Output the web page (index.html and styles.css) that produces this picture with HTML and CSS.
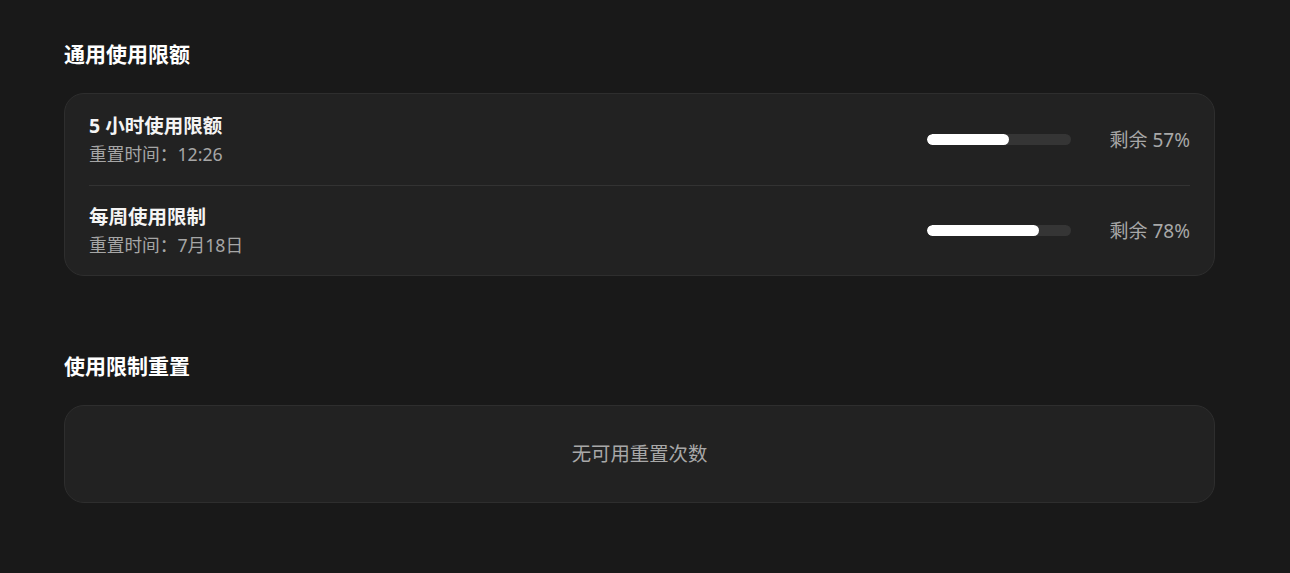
FILE: index.html
```html
<!DOCTYPE html>
<html lang="zh-CN">
<head>
<meta charset="utf-8">
<title>使用限额</title>
<link rel="stylesheet" href="styles.css">
</head>
<body>
<main class="page">
  <section class="section">
    <h2 class="section-title">通用使用限额</h2>
    <div class="card">
      <div class="row">
        <div class="info">
          <div class="row-title">5 小时使用限额</div>
          <div class="row-sub">重置时间：12:26</div>
        </div>
        <div class="meter">
          <div class="bar"><div class="fill" style="width:57%"></div></div>
          <div class="pct">剩余 57%</div>
        </div>
      </div>
      <div class="row">
        <div class="info">
          <div class="row-title">每周使用限制</div>
          <div class="row-sub">重置时间：7月18日</div>
        </div>
        <div class="meter">
          <div class="bar"><div class="fill" style="width:78%"></div></div>
          <div class="pct">剩余 78%</div>
        </div>
      </div>
    </div>
  </section>
  <section class="section">
    <h2 class="section-title">使用限制重置</h2>
    <div class="card card-empty">
      <div class="empty">无可用重置次数</div>
    </div>
  </section>
</main>
</body>
</html>
```
FILE: styles.css
```css
* { box-sizing: border-box; }
html, body { margin: 0; padding: 0; }
body {
  background: #191919;
  color: #f2f2f2;
  font-family: "Noto Sans", "Noto Sans CJK SC", sans-serif;
}
.page {
  padding: 40px 0 0 64px;
  width: 1215px;
  display: flex;
  flex-direction: column;
  gap: 76px;
}
.section-title {
  margin: 0 0 25px;
  font-size: 21px;
  line-height: 28px;
  font-weight: 700;
  color: #ffffff;
}
.card {
  background: #222222;
  border: 1px solid #2e2e2e;
  border-radius: 20px;
  padding: 0 24px;
}
.row {
  display: flex;
  align-items: center;
  justify-content: space-between;
  padding: 17px 0;
  height: 91px;
}
.row + .row { border-top: 1px solid #333333; height: 90px; }
.info { display: flex; flex-direction: column; gap: 1px; }
.row-title {
  font-size: 19.5px;
  line-height: 28px;
  font-weight: 700;
  color: #f4f4f4;
}
.row-sub {
  font-size: 17.7px;
  line-height: 26px;
  color: #a6a6a6;
}
.meter { display: flex; align-items: center; gap: 20px; }
.bar {
  width: 144px;
  height: 11px;
  border-radius: 6px;
  background: #353535;
  overflow: hidden;
}
.fill { height: 100%; background: #ffffff; border-radius: 6px; }
.pct {
  min-width: 99px;
  text-align: right;
  font-size: 19px;
  line-height: 28px;
  color: #a8a8a8;
}
.card-empty {
  height: 98px;
  display: flex;
  align-items: center;
  justify-content: center;
}
.empty {
  font-size: 19.4px;
  line-height: 28px;
  color: #a8a8a8;
}
```
